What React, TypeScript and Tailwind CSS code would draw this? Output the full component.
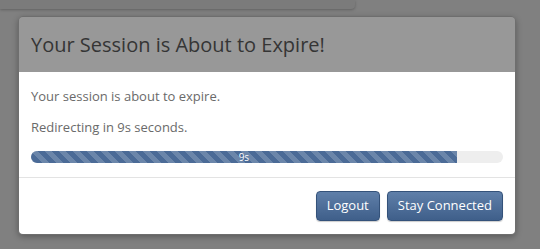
export default function App() {
  const font = { fontFamily: '"Open Sans", "Segoe UI", sans-serif' }
  return (
    <div className="w-[540px] h-[249px] bg-[#808080] overflow-hidden" style={font}>
      <div className="w-[355px] h-[9px] bg-[#7b7b7b] rounded-br-[4px] shadow-[0_1px_3px_rgba(0,0,0,0.25)]" />
      <div className="mt-[7px] ml-[18px] w-[498px] rounded-[5px] overflow-hidden border border-[#6e6e6e] shadow-[0_2px_6px_rgba(0,0,0,0.3)]">
        <div className="h-[55px] bg-[#989898] flex items-center px-[12px]">
          <h2 className="text-[20px] text-[#353535] font-normal">Your Session is About to Expire!</h2>
        </div>
        <div className="bg-white px-[12px] pt-[14px] pb-[14px] border-b border-[#e3e3e3]">
          <p className="text-[13px] leading-[20px] text-[#6a6a6a]">Your session is about to expire.</p>
          <p className="mt-[11px] text-[13px] leading-[20px] text-[#6a6a6a]">Redirecting in 9s seconds.</p>
          <div className="mt-[14px] h-[12px] rounded-full bg-[#eeeeee] overflow-hidden">
            <div
              className="h-full w-[90.2%] bg-[#4b6b97] flex items-center justify-center text-[10px] leading-none text-white bg-[linear-gradient(45deg,rgba(255,255,255,0.18)_25%,transparent_25%,transparent_50%,rgba(255,255,255,0.18)_50%,rgba(255,255,255,0.18)_75%,transparent_75%,transparent)] bg-[length:14px_14px]"
            >
              9s
            </div>
          </div>
        </div>
        <div className="bg-white h-[56px] flex items-center justify-end gap-[7px] px-[12px]">
          <button className="h-[30px] px-[10px] rounded-[4px] border border-[#34527a] bg-[linear-gradient(#5f7fa9,#3f5f8a)] text-white text-[13px] shadow-[0_1px_1px_rgba(0,0,0,0.2)]">
            Logout
          </button>
          <button className="h-[30px] px-[10px] rounded-[4px] border border-[#34527a] bg-[linear-gradient(#5f7fa9,#3f5f8a)] text-white text-[13px] shadow-[0_1px_1px_rgba(0,0,0,0.2)]">
            Stay Connected
          </button>
        </div>
      </div>
    </div>
  )
}
